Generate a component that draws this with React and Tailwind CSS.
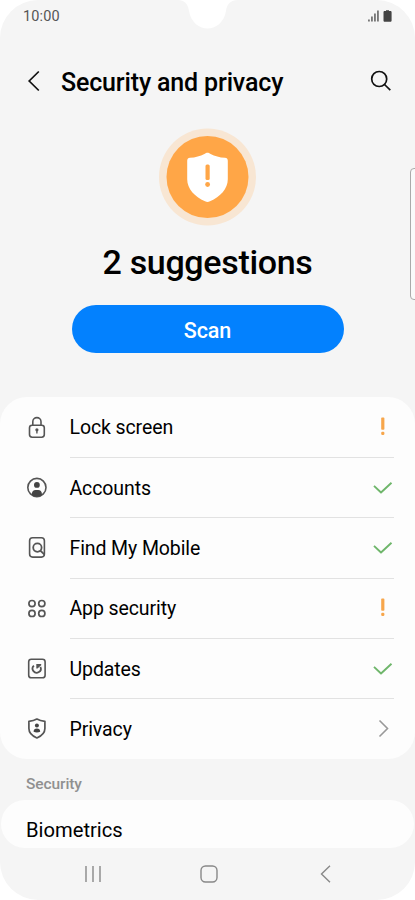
const LockIcon = () => (
  <svg width="22" height="24" viewBox="0 0 22 24" fill="none" stroke="#555" strokeWidth="1.6">
    <rect x="3.5" y="9.2" width="14.8" height="12" rx="2.6" />
    <path d="M6.8 9V5.7a4.1 4.1 0 0 1 8.2 0V9" />
    <circle cx="10.9" cy="13.8" r="1.6" fill="#555" stroke="none" />
    <path d="M10.9 14v3.4" strokeWidth="1.4" />
  </svg>
);

const AccountIcon = () => (
  <svg width="22" height="24" viewBox="0 0 22 24" fill="none">
    <circle cx="10.9" cy="11.5" r="9.1" stroke="#555" strokeWidth="1.6" />
    <circle cx="10.9" cy="8.9" r="2.9" fill="#444" />
    <path d="M5.9 19v-1.3c0-2.3 1.6-3.8 3.7-3.8h2.6c2.1 0 3.7 1.5 3.7 3.8V19c-3 2-7 2-10 0z" fill="#444" />
  </svg>
);

const FindIcon = () => (
  <svg width="22" height="24" viewBox="0 0 22 24" fill="none" stroke="#555" strokeWidth="1.6">
    <rect x="3.6" y="1.7" width="14.8" height="19.4" rx="3" />
    <circle cx="11.4" cy="11.6" r="4.2" strokeWidth="1.8" />
    <path d="M14.3 14.6l4 3.8" strokeWidth="1.9" />
  </svg>
);

const AppsIcon = () => (
  <svg width="22" height="24" viewBox="0 0 22 24" fill="none" stroke="#555" strokeWidth="1.7">
    <circle cx="6" cy="6.6" r="3.1" />
    <circle cx="15.8" cy="6.600" r="3.1" />
    <circle cx="6" cy="16.4" r="3.1" />
    <circle cx="15.8" cy="16.4" r="3.1" />
  </svg>
);

const UpdateIcon = () => (
  <svg width="22" height="24" viewBox="0 0 22 24" fill="none" stroke="#555" strokeWidth="1.6">
    <rect x="2.7" y="2.2" width="16.4" height="18.6" rx="2.6" />
    <path d="M7.9 8.6a4.1 4.1 0 1 0 6.5 1.2" strokeWidth="1.8" />
    <path d="M10.3 6.900h4.9v1.3l-3.7 3.400h-1.200z" fill="#555" stroke="none" />
  </svg>
);

const PrivacyIcon = () => (
  <svg width="22" height="24" viewBox="0 0 22 24" fill="none">
    <path
      d="M10.9 2.1c2.4 1.4 4.8 2 8 2.2v7.2c0 4.500-3.400 7.500-8 9.500-4.600-2-8-5-8-9.500V4.300c3.200-.2 5.600-.8 8-2.200z"
      stroke="#555"
      strokeWidth="1.7"
      strokeLinejoin="round"
    />
    <circle cx="10.9" cy="8.4" r="2" fill="#444" />
    <path d="M7.600 14.700c0-2 1.300-3.100 3.300-3.100s3.300 1.100 3.300 3.100c-2 .9-4.600.9-6.600 0z" fill="#444" />
  </svg>
);

const WarnMark = () => (
  <svg width="22" height="22" viewBox="0 0 22 22" fill="#f7a64b">
    <rect x="9.2" y="1.6" width="3.2" height="12.2" rx="0.8" />
    <rect x="9.2" y="15.8" width="3.2" height="3.2" rx="1.2" />
  </svg>
);

const CheckMark = () => (
  <svg width="22" height="22" viewBox="0 0 22 22" fill="none" stroke="#6fb66b" strokeWidth="1.9">
    <path d="M2 8.900l7 6.600L19.500 5.700" strokeLinejoin="round" />
  </svg>
);

const ArrowMark = () => (
  <svg width="22" height="22" viewBox="0 0 22 22" fill="none" stroke="#999" strokeWidth="1.6">
    <path d="M7.5 2.500l8 8-8 8" />
  </svg>
);

const items = [
  { label: "Lock screen", Icon: LockIcon, Mark: WarnMark },
  { label: "Accounts", Icon: AccountIcon, Mark: CheckMark },
  { label: "Find My Mobile", Icon: FindIcon, Mark: CheckMark },
  { label: "App security", Icon: AppsIcon, Mark: WarnMark },
  { label: "Updates", Icon: UpdateIcon, Mark: CheckMark },
  { label: "Privacy", Icon: PrivacyIcon, Mark: ArrowMark },
];

const App = () => {
  return (
    <div className="w-[415px] h-[900px] bg-white font-['Roboto',sans-serif]">
      <div className="relative flex flex-col w-full h-full bg-[#f5f5f5] rounded-[38px] overflow-hidden text-black">
        {/* Camera notch */}
        <svg className="absolute left-[178px] top-0" width="60" height="30" viewBox="0 0 60 30" fill="#fff">
          <path d="M0 0c6.500 0 10 4 11 11 2 11 9.500 17.500 18.500 17.500S46 22 48 11c1-7 4.500-11 12-11z" />
        </svg>
        {/* Edge panel handle */}
        <div className="absolute left-[410px] top-[168px] w-3 h-[132px] rounded-[4px] border border-[#aaa] bg-[#fafafa]" />

        {/* Status bar */}
        <div className="flex items-center justify-between h-8 pl-[23px] pr-[22px] text-[#555]">
          <span className="pt-px text-[14.5px] leading-8 tracking-[0.15px]">10:00</span>
          <svg width="26" height="14" viewBox="0 0 26 14" fill="#444">
            <rect x="1.3" y="10.500" width="1.300" height="2" />
            <rect x="4.3" y="7.500" width="1.300" height="5" />
            <rect x="7.3" y="4.500" width="1.300" height="8" />
            <rect x="10.3" y="1.500" width="1.300" height="11" />
            <path d="M19 2V1.300h3V2h1.300c.8 0 1.300.5 1.300 1.300v8.200c0 .8-.5 1.300-1.300 1.300h-5.500c-.8 0-1.300-.5-1.300-1.300V3.300c0-.8.500-1.300 1.300-1.300z" />
          </svg>
        </div>

        {/* Title */}
        <div className="flex items-center h-[98px] pl-[26px] pr-[23.5px]">
          <svg width="16" height="24" viewBox="0 0 16 24" fill="none" stroke="#111" strokeWidth="1.7">
            <path d="M12.800 2.500L3.200 12l9.600 9.500" />
          </svg>
          <h1 className="ml-[19px] pt-[3px] flex-1 text-[25px] leading-8 font-medium tracking-[-0.16px] whitespace-nowrap">
            Security and privacy
          </h1>
          <svg width="22" height="22" viewBox="0 0 22 22" fill="none" stroke="#111" strokeWidth="1.7">
            <circle cx="9.200" cy="9" r="7.500" />
            <path d="M14.500 14.500l5.800 5.700" />
          </svg>
        </div>

        {/* Summary */}
        <div className="flex flex-col items-center h-[266.5px] shrink-0">
          <svg className="-mt-[2px] shrink-0" width="97" height="98" viewBox="0.5 0 97 98">
            <circle cx="49" cy="49" r="48.500" fill="#f8e6d3" />
            <circle cx="49" cy="49" r="41" fill="#ffa647" />
            <path
              d="M49 24.700c1 0 1.900.6 3.100 1.200 4.200 2.100 8.900 3.500 14.400 3.900 1.700.1 2.800 1.200 2.800 2.900v18.500c0 9.500-7.500 17.500-17.800 22-1 .4-1.700.7-2.500.7s-1.500-.3-2.500-.7C36.200 68.700 28.700 60.700 28.700 51.200V32.700c0-1.700 1.100-2.800 2.800-2.900 5.500-.4 10.200-1.800 14.400-3.900 1.200-.6 2.100-1.200 3.100-1.200z"
              fill="#fff"
            />
            <rect x="47" y="36.500" width="4.200" height="15.500" rx="1.500" fill="#ffa647" />
            <circle cx="49.100" cy="56.500" r="2.400" fill="#ffa647" />
          </svg>
          <h2 className="mt-[16px] text-[34px] leading-10 font-medium tracking-[-0.32px] whitespace-nowrap">2 suggestions</h2>
          <button className="mt-[23px] w-[272px] h-[48px] shrink-0 rounded-full bg-[#0381fe] pt-[3px] text-white text-[21.5px] leading-6 font-medium tracking-[-0.1px]">
            Scan
          </button>
        </div>

        {/* Settings list */}
        <div className="h-[362.5px] shrink-0 pt-[1.2px] bg-[#fdfdfd] rounded-[27px]">
          {items.map(({ label, Icon, Mark }, i) => (
            <div key={label} className="flex items-center h-[60.3px] pl-[26px] pr-[21.5px]">
              <Icon />
              <div
                className={`ml-[21.5px] flex flex-1 items-center justify-between h-full ${
                  i < items.length - 1 ? "border-b border-[#e2e2e2]" : ""
                }`}
              >
                <span className="pt-[2px] text-[19.5px] leading-6 tracking-[-0.1px]">{label}</span>
                <Mark />
              </div>
            </div>
          ))}
        </div>

        <div className="h-[41px] shrink-0 pl-[26px] pt-[15px] text-[15.5px] leading-5 font-medium tracking-[-0.1px] text-[#909090]">
          Security
        </div>
        <div className="h-[48px] shrink-0 mx-[1px] pl-[25px] pt-[18px] bg-[#fdfdfd] rounded-full text-[20.2px] leading-6">
          Biometrics
        </div>

        {/* Navigation bar */}
        <div className="flex flex-1 items-center justify-between pl-[83px] pr-[79px] text-[#888]">
          <svg width="20" height="20" viewBox="0 0 20 20" stroke="currentColor" strokeWidth="1.4">
            <path d="M3 2v16M10 2v16M17 2v16" />
          </svg>
          <svg className="mr-[2px]" width="20" height="20" viewBox="0 0 20 20" fill="none" stroke="currentColor" strokeWidth="1.4">
            <rect x="2" y="2" width="16" height="16" rx="4.5" />
          </svg>
          <svg width="20" height="20" viewBox="0 0 20 20" fill="none" stroke="currentColor" strokeWidth="1.4">
            <path d="M14 1.700L5.500 10l8.500 8.300" />
          </svg>
        </div>
      </div>
    </div>
  );
};

export default App;
